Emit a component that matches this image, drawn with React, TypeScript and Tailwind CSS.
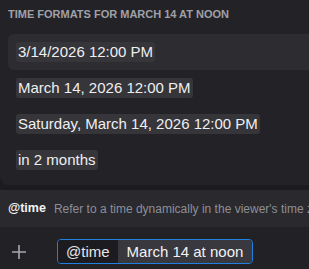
export default function App() {
  const rows = [
    "3/14/2026 12:00 PM",
    "March 14, 2026 12:00 PM",
    "Saturday, March 14, 2026 12:00 PM",
    "in 2 months",
  ];
  return (
    <div className="w-[309px] h-[269px] overflow-hidden bg-[#1c1c1f] flex flex-col font-['Liberation_Sans',Arial,sans-serif]">
      <div className="w-[340px] shrink-0 bg-[#232327] rounded-b-lg pb-[7px]">
        <div className="h-[34px] pt-[8px] px-2 text-[11px] leading-[12px] font-bold uppercase text-[#a0a0a8]">
          Time formats for March 14 at noon
        </div>
        <div className="px-2 flex flex-col">
          {rows.map((r, i) => (
            <div
              key={r}
              className={`h-[36px] flex items-center px-2 rounded-md ${i === 0 ? "bg-[#2c2c31]" : ""}`}
            >
              <span className="text-[15px] leading-[20px] bg-[#35353a] rounded-[3px] px-[2px] text-[#efeff1]">
                {r}
              </span>
            </div>
          ))}
        </div>
      </div>
      <div className="mt-[5px] h-[37px] shrink-0 bg-[#29292e] flex items-center px-2 text-[12px] whitespace-nowrap">
        <span className="font-bold text-[12.5px] text-[#f2f3f5]">@time</span>
        <span className="ml-[8px] text-[#8e8e96]">Refer to a time dynamically in the viewer's time zone</span>
      </div>
      <div className="flex-1 bg-[#222226] flex items-start pt-[12px] pl-[11px]">
        <div className="h-[25px] flex items-center">
          <svg width="16" height="16" viewBox="0 0 16 16" className="text-[#a8a8b0]">
            <path d="M8 1v14M1 8h14" stroke="currentColor" strokeWidth="1.6" />
          </svg>
        </div>
        <div className="ml-[30px] h-[25px] flex border border-[#1f80e2] rounded-[4px] overflow-hidden text-[15px] leading-[23px]">
          <span className="bg-[#1c1c20] px-[8px] text-[#e6e6e8]">@time</span>
          <span className="bg-[#38383e] pl-[9px] pr-[9px] text-[#f2f2f4]">March 14 at noon</span>
        </div>
      </div>
    </div>
  );
}
